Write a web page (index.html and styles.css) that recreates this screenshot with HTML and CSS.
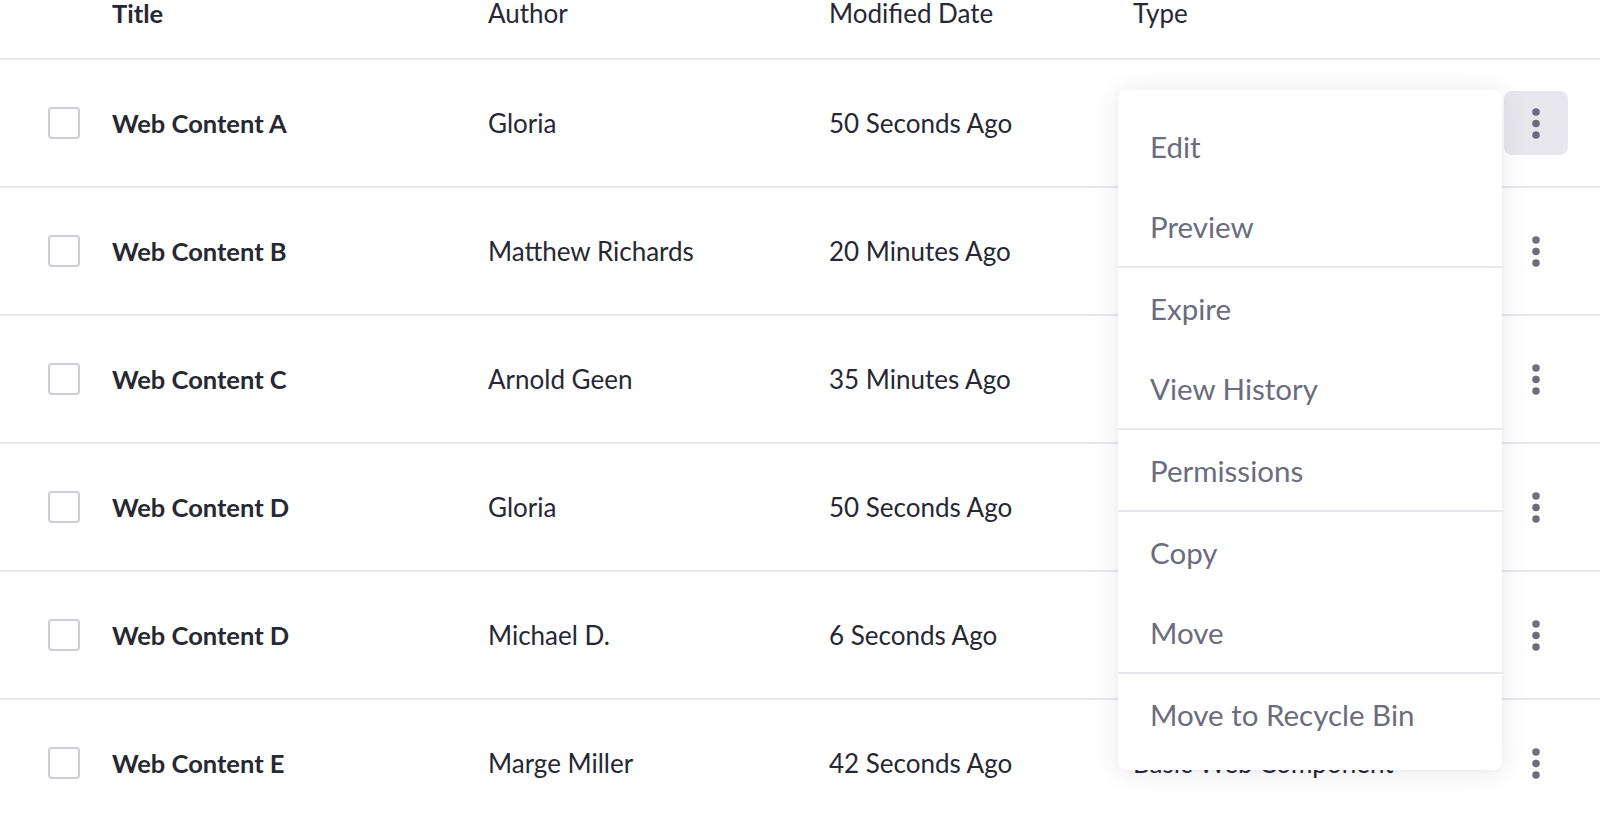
FILE: index.html
```html
<!DOCTYPE html>
<html lang="en">
<head>
<meta charset="utf-8">
<title>Web Content</title>
<link rel="stylesheet" href="styles.css">
</head>
<body>
<div class="table">
  <div class="row head">
    <div class="cell"></div>
    <div class="cell title">Title</div>
    <div class="cell">Author</div>
    <div class="cell">Modified Date</div>
    <div class="cell">Type</div>
    <div class="cell"></div>
  </div>

  <div class="row">
    <div class="cell"><span class="check"></span></div>
    <div class="cell title">Web Content A</div>
    <div class="cell">Gloria</div>
    <div class="cell">50 Seconds Ago</div>
    <div class="cell">Basic Web Component</div>
    <div class="cell"><button class="kebab active"><svg width="8" height="31" viewBox="0 0 8 31"><circle cx="4" cy="4" r="3.75"/><circle cx="4" cy="15.5" r="3.75"/><circle cx="4" cy="27" r="3.75"/></svg></button></div>
  </div>

  <div class="row">
    <div class="cell"><span class="check"></span></div>
    <div class="cell title">Web Content B</div>
    <div class="cell">Matthew Richards</div>
    <div class="cell">20 Minutes Ago</div>
    <div class="cell">Basic Web Component</div>
    <div class="cell"><button class="kebab"><svg width="8" height="31" viewBox="0 0 8 31"><circle cx="4" cy="4" r="3.75"/><circle cx="4" cy="15.5" r="3.75"/><circle cx="4" cy="27" r="3.75"/></svg></button></div>
  </div>

  <div class="row">
    <div class="cell"><span class="check"></span></div>
    <div class="cell title">Web Content C</div>
    <div class="cell">Arnold Geen</div>
    <div class="cell">35 Minutes Ago</div>
    <div class="cell">Basic Web Component</div>
    <div class="cell"><button class="kebab"><svg width="8" height="31" viewBox="0 0 8 31"><circle cx="4" cy="4" r="3.75"/><circle cx="4" cy="15.5" r="3.75"/><circle cx="4" cy="27" r="3.75"/></svg></button></div>
  </div>

  <div class="row">
    <div class="cell"><span class="check"></span></div>
    <div class="cell title">Web Content D</div>
    <div class="cell">Gloria</div>
    <div class="cell">50 Seconds Ago</div>
    <div class="cell">Basic Web Component</div>
    <div class="cell"><button class="kebab"><svg width="8" height="31" viewBox="0 0 8 31"><circle cx="4" cy="4" r="3.75"/><circle cx="4" cy="15.5" r="3.75"/><circle cx="4" cy="27" r="3.75"/></svg></button></div>
  </div>

  <div class="row">
    <div class="cell"><span class="check"></span></div>
    <div class="cell title">Web Content D</div>
    <div class="cell">Michael D.</div>
    <div class="cell">6 Seconds Ago</div>
    <div class="cell">Basic Web Component</div>
    <div class="cell"><button class="kebab"><svg width="8" height="31" viewBox="0 0 8 31"><circle cx="4" cy="4" r="3.75"/><circle cx="4" cy="15.5" r="3.75"/><circle cx="4" cy="27" r="3.75"/></svg></button></div>
  </div>

  <div class="row last">
    <div class="cell"><span class="check"></span></div>
    <div class="cell title">Web Content E</div>
    <div class="cell">Marge Miller</div>
    <div class="cell">42 Seconds Ago</div>
    <div class="cell">Basic Web Component</div>
    <div class="cell"><button class="kebab"><svg width="8" height="31" viewBox="0 0 8 31"><circle cx="4" cy="4" r="3.75"/><circle cx="4" cy="15.5" r="3.75"/><circle cx="4" cy="27" r="3.75"/></svg></button></div>
  </div>
</div>

<ul class="menu">
  <li class="item">Edit</li>
  <li class="item">Preview</li>
  <li class="divider"></li>
  <li class="item">Expire</li>
  <li class="item">View History</li>
  <li class="divider"></li>
  <li class="item">Permissions</li>
  <li class="divider"></li>
  <li class="item">Copy</li>
  <li class="item">Move</li>
  <li class="divider"></li>
  <li class="item">Move to Recycle Bin</li>
</ul>
</body>
</html>
```

FILE: styles.css
```css
html, body {
  margin: 0;
  padding: 0;
  background: #ffffff;
}

body {
  font-family: Lato, "Noto Sans", sans-serif;
  font-size: 26px;
  color: #272833;
  overflow: hidden;
  height: 826px;
  position: relative;
}

.table {
  width: 1600px;
}

.row {
  display: grid;
  grid-template-columns: 64px 376px 341px 304px 371px 64px;
  padding: 0 32px 0 48px;
  height: 126px;
  align-items: center;
  border-bottom: 2px solid #e7e7ed;
}

.row.head {
  height: 58px;
  align-items: start;
}

.row.head .cell {
  line-height: 26px;
}

.row.last {
  border-bottom: none;
}

.cell {
  white-space: nowrap;
  line-height: 34px;
}

.title {
  font-weight: 700;
  font-size: 25.5px;
}

.check {
  display: block;
  width: 28px;
  height: 28px;
  border: 2px solid #cdced9;
  border-radius: 4px;
  background: #fff;
}

.kebab {
  width: 64px;
  height: 64px;
  border: none;
  border-radius: 8px;
  background: transparent;
  padding: 0;
  display: flex;
  align-items: center;
  justify-content: center;
  fill: #6b6c7e;
}

.kebab.active {
  background: #e7e7ed;
}

.menu {
  position: absolute;
  left: 1118px;
  top: 90px;
  width: 384px;
  margin: 0;
  padding: 16px 0;
  list-style: none;
  background: #ffffff;
  border-radius: 8px;
  box-shadow: 0 2px 28px rgba(0, 0, 0, 0.09), 0 1px 4px rgba(0, 0, 0, 0.03);
}

.item {
  height: 80px;
  display: flex;
  align-items: center;
  padding: 0 32px;
  color: #6b6c7e;
  font-size: 29.5px;
}

.divider {
  height: 2px;
  background: #e7e7ed;
}
```
